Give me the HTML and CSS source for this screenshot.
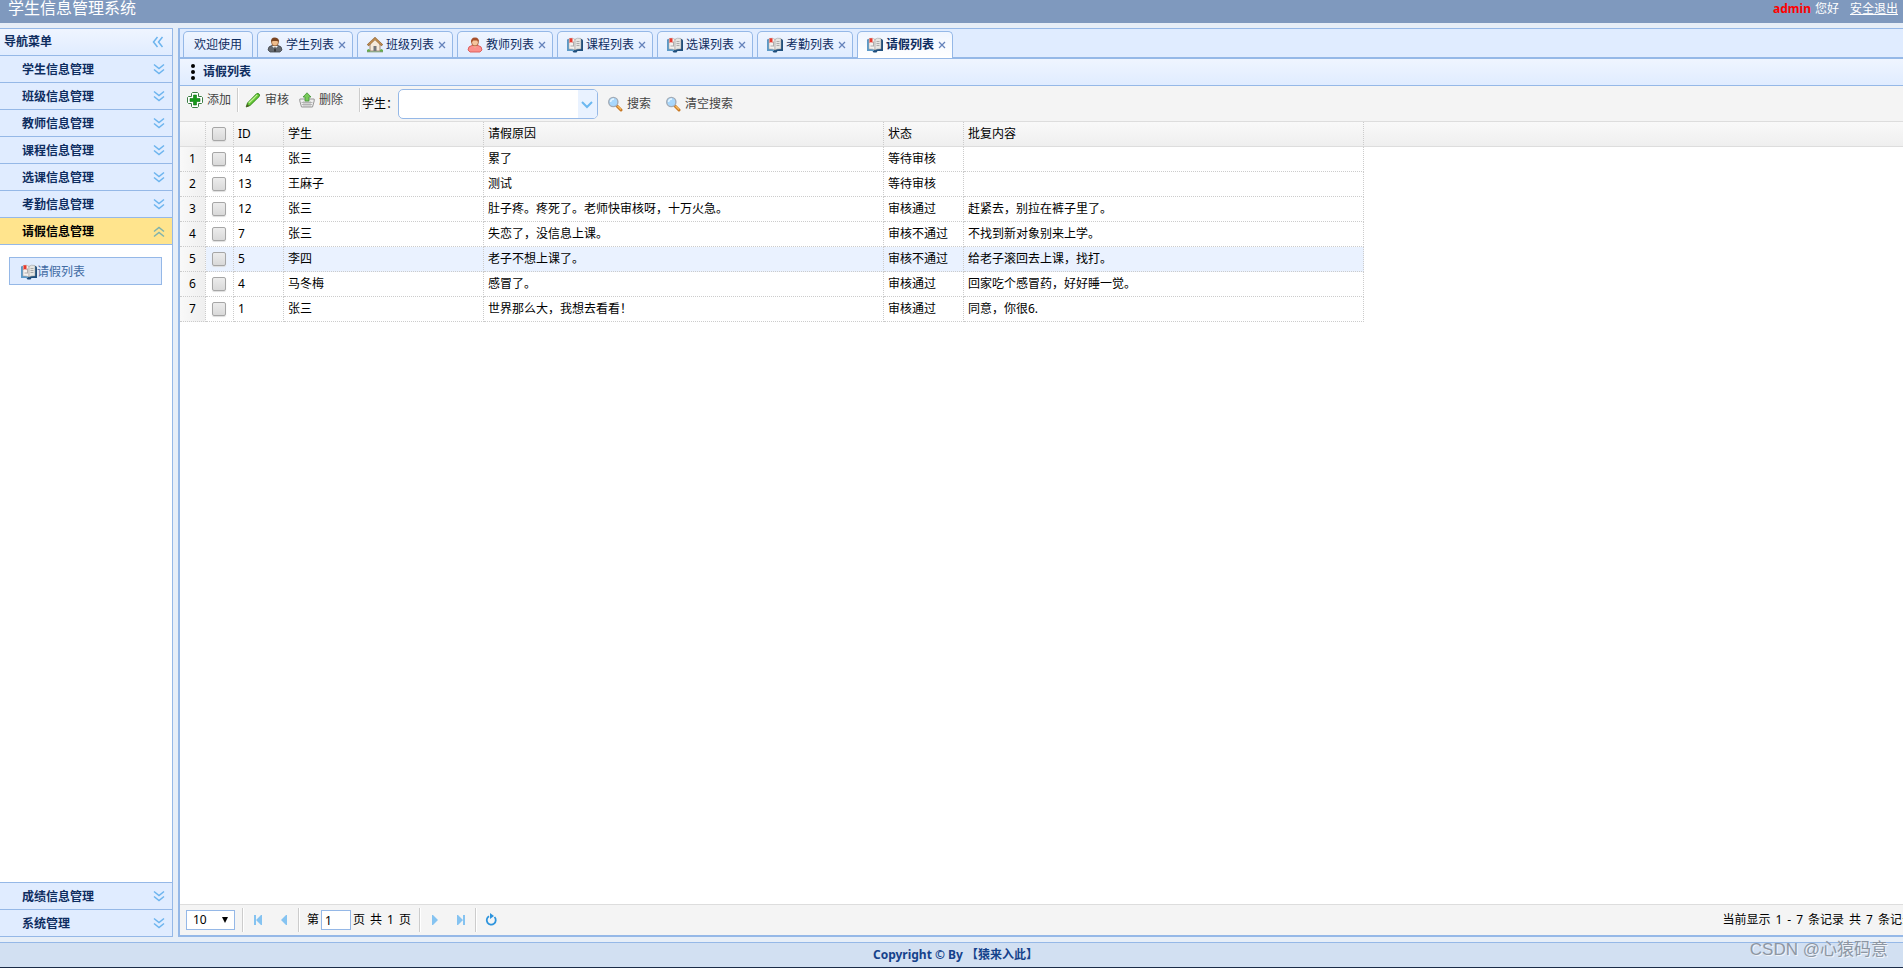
FILE: index.html
```html
<!DOCTYPE html>
<html lang="zh-CN">
<head>
<meta charset="utf-8">
<title>学生信息管理系统</title>
<link rel="stylesheet" href="styles.css">
</head>
<body>
<svg class="sprite" aria-hidden="true">
  <symbol id="down" viewBox="0 0 16 16"><path d="M3 2.500l5 4 5-4M3 7.500l5 4 5-4" fill="none" stroke="#6cb4ee" stroke-width="1.500"/></symbol>
  <symbol id="up" viewBox="0 0 16 16"><path d="M3 7.500l5-4 5 4M3 12.500l5-4 5 4" fill="none" stroke="#7fb2ad" stroke-width="1.500"/></symbol>
  <symbol id="left" viewBox="0 0 16 16"><path d="M7.500 3l-4 5 4 5M12.500 3l-4 5 4 5" fill="none" stroke="#6cb4ee" stroke-width="1.500"/></symbol>
  <symbol id="book" viewBox="0 0 16 16">
    <path d="M0 3.500L1 2h14l1 1.500V14h-5.500L9.500 15.500h-3L5.500 14H0z" fill="#1f4f7d"/>
    <path d="M0 3.500L1 2h1.500v10H7v2H0z" fill="#5c9ac8"/>
    <path d="M2 1.500q4-1 6 .8V13q-2-1.500-6-1z" fill="#f4f1ee" stroke="#a9a29c" stroke-width=".5"/>
    <path d="M14 1.500q-4-1-6 .8V13q2-1.500 6-1z" fill="#e6e6e3" stroke="#8f9191" stroke-width=".5"/>
    <path d="M9.500 4.500h3M9.500 6.500h3M9.500 8.500h3M3.500 9h2.500M6.500 4.500v5" stroke="#9c9c9c" stroke-width=".8"/>
    <path d="M2.500 1.300h3V6L4 5 2.500 6z" fill="#e8382c"/>
  </symbol>
  <symbol id="student" viewBox="0 0 16 16">
    <path d="M1 13q0-4 4-4.500h6q4 .5 4 4.500l-2 2H3z" fill="#666a70" stroke="#44474c" stroke-width=".8"/>
    <path d="M5 9l3 3 3-3z" fill="#f2f2f2"/><path d="M7.500 10h1l.5 4-1 1-1-1z" fill="#333"/>
    <circle cx="8" cy="5.500" r="3.400" fill="#f0bd8c" stroke="#895128" stroke-width=".7"/>
    <path d="M4 6Q3.500.5 8 .6T12 6l-1-2H5z" fill="#7b4521"/>
  </symbol>
  <symbol id="teacher" viewBox="0 0 16 16">
    <path d="M1 13q0-4 4-4.500h6q4 .5 4 4.500l-2 2H3z" fill="#fb8f8b" stroke="#db5755" stroke-width=".9"/>
    <path d="M6 8h4l-2 3z" fill="#f2bd94"/>
    <circle cx="8" cy="5.500" r="3.400" fill="#f6c59d" stroke="#984927" stroke-width=".7"/>
    <path d="M4 6Q3.500 .5 8 .5T12 6l-1-2.500H6z" fill="#a7502b"/>
  </symbol>
  <symbol id="house" viewBox="0 0 16 16">
    <path d="M3 7l5-5 5 5v7H3z" fill="#f5eadb" stroke="#92775d" stroke-width=".8"/>
    <path d="M.8 8.500L8 1.500l7.200 7" fill="none" stroke="#976936" stroke-width="2.400"/>
    <path d="M1.300 8L8 1.600 14.700 8" fill="none" stroke="#dca764" stroke-width="1"/>
    <path d="M6.500 9h3v5h-3z" fill="#73777c"/>
    <path d="M0 15v-2l1.500-1 1.500 1v2zM16 15v-2l-1.500-1-1.500 1v2z" fill="#66ad4b"/>
    <path d="M0 14.800h16" stroke="#7d9c70"/>
  </symbol>
  <symbol id="add" viewBox="0 0 16 16">
    <path d="M5.500.5h5l1 1v3h3l1 1v5l-1 1h-3v3l-1 1h-5l-1-1v-3h-3l-1-1v-5l1-1h3v-3z" fill="#fff" stroke="#3a7d43"/>
    <path d="M6.500 3h3v3.500H13v3H9.500V13h-3V9.500H3v-3h3.500z" fill="#159a19" stroke="#08720d" stroke-width=".6"/>
  </symbol>
  <symbol id="pencil" viewBox="0 0 16 16">
    <path d="M1.200 15l1.300-4L11.500 1.800Q13 1 14 2T14.200 4.500L5 13.500z" fill="#65c735" stroke="#278011" stroke-width=".9"/>
    <path d="M3.800 11L12.200 2.900" stroke="#c4f399" stroke-width="1.200"/>
    <path d="M1.200 15l1-3L4.200 14z" fill="#594e2a"/>
  </symbol>
  <symbol id="basket" viewBox="0 0 16 16">
    <path d="M.8 7h14.400v2l-1.700 6h-11L.8 9z" fill="#eee" stroke="#969696"/>
    <path d="M2.500 10.500h11M3 12.500h10M5 9v6M7 9v6M9 9v6M11 9v6" stroke="#aaa" stroke-width=".8"/>
    <path d="M8 .8l4 4.200h-2v4H6V5H4z" fill="#78ca58" stroke="#44933a" stroke-width=".8"/>
  </symbol>
  <symbol id="search" viewBox="0 0 16 16">
    <path d="M10 10l4 4" stroke="#c87925" stroke-width="3" stroke-linecap="round"/>
    <path d="M10.500 10l3.500 3.500" stroke="#f8bb5c" stroke-width="1.200"/>
    <circle cx="6.300" cy="6" r="4.600" fill="#a8d7fc" stroke="#a2abb6" stroke-width="1.400"/>
    <path d="M3.500 6Q4 3 7 3" fill="none" stroke="#e5f5ff" stroke-width="1.500"/>
  </symbol>
  <symbol id="close" viewBox="0 0 8 8"><path d="M1 1l6 6M7 1L1 7" stroke="#6482bb" stroke-width="1.300"/></symbol>
</svg>

<header class="banner">
  <h1 class="app-title">学生信息管理系统</h1>
  <div class="account"><strong class="user">admin</strong><span>您好</span><a class="logout" href="#">安全退出</a></div>
</header>

<div class="workspace">
  <nav class="sidebar" aria-label="导航菜单">
    <div class="side-head"><span>导航菜单</span><button class="tool" aria-label="折叠菜单"><svg class="icon"><use href="#left"/></svg></button></div>
    <button class="fold">学生信息管理<svg class="icon"><use href="#down"/></svg></button>
    <button class="fold">班级信息管理<svg class="icon"><use href="#down"/></svg></button>
    <button class="fold">教师信息管理<svg class="icon"><use href="#down"/></svg></button>
    <button class="fold">课程信息管理<svg class="icon"><use href="#down"/></svg></button>
    <button class="fold">选课信息管理<svg class="icon"><use href="#down"/></svg></button>
    <button class="fold">考勤信息管理<svg class="icon"><use href="#down"/></svg></button>
    <button class="fold open" aria-expanded="true">请假信息管理<svg class="icon"><use href="#up"/></svg></button>
    <div class="fold-body"><a class="side-link" href="#"><svg class="icon"><use href="#book"/></svg>请假列表</a></div>
    <button class="fold lower">成绩信息管理<svg class="icon"><use href="#down"/></svg></button>
    <button class="fold lower">系统管理<svg class="icon"><use href="#down"/></svg></button>
  </nav>

  <main class="content">
    <div class="tabs">
      <div class="tab"><a href="#">欢迎使用</a></div>
      <div class="tab closable"><svg class="icon"><use href="#student"/></svg><a href="#">学生列表</a><button class="close" aria-label="关闭"><svg><use href="#close"/></svg></button></div>
      <div class="tab closable"><svg class="icon"><use href="#house"/></svg><a href="#">班级列表</a><button class="close" aria-label="关闭"><svg><use href="#close"/></svg></button></div>
      <div class="tab closable"><svg class="icon"><use href="#teacher"/></svg><a href="#">教师列表</a><button class="close" aria-label="关闭"><svg><use href="#close"/></svg></button></div>
      <div class="tab closable"><svg class="icon"><use href="#book"/></svg><a href="#">课程列表</a><button class="close" aria-label="关闭"><svg><use href="#close"/></svg></button></div>
      <div class="tab closable"><svg class="icon"><use href="#book"/></svg><a href="#">选课列表</a><button class="close" aria-label="关闭"><svg><use href="#close"/></svg></button></div>
      <div class="tab closable"><svg class="icon"><use href="#book"/></svg><a href="#">考勤列表</a><button class="close" aria-label="关闭"><svg><use href="#close"/></svg></button></div>
      <div class="tab closable selected"><svg class="icon"><use href="#book"/></svg><a href="#">请假列表</a><button class="close" aria-label="关闭"><svg><use href="#close"/></svg></button></div>
    </div>

    <div class="panel-head">
      <svg class="icon" viewBox="0 0 16 16"><circle cx="8" cy="2" r="2"/><circle cx="8" cy="8" r="2"/><circle cx="8" cy="14" r="2"/></svg>
      <h2>请假列表</h2>
    </div>

    <div class="toolbar">
      <div class="actions">
        <button class="action"><svg class="icon"><use href="#add"/></svg>添加</button>
        <span class="rule"></span>
        <button class="action"><svg class="icon"><use href="#pencil"/></svg>审核</button>
        <button class="action"><svg class="icon"><use href="#basket"/></svg>删除</button>
        <span class="rule last"></span>
      </div>
      <div class="filter">
        <label for="student-name">学生：</label>
        <div class="combo"><input id="student-name" type="text"><button class="combo-arrow" aria-label="展开"><svg viewBox="0 0 18 28"><path d="M4 12l5 5 5-5" fill="none" stroke="#6cb8f0" stroke-width="2"/></svg></button></div>
        <button class="action"><svg class="icon"><use href="#search"/></svg>搜索</button>
        <button class="action"><svg class="icon"><use href="#search"/></svg>清空搜索</button>
      </div>
    </div>

    <div class="grid-area">
      <table class="grid">
        <colgroup><col class="c-num"><col class="c-check"><col class="c-id"><col class="c-student"><col class="c-wide"><col class="c-state"><col class="c-wide"><col></colgroup>
        <thead><tr><th></th><th class="check"><input type="checkbox" aria-label="全选"></th><th>ID</th><th>学生</th><th>请假原因</th><th>状态</th><th>批复内容</th><th class="rest"></th></tr></thead>
        <tbody>
          <tr><td class="num">1</td><td class="check"><input type="checkbox" aria-label="选择 14"></td><td>14</td><td>张三</td><td>累了</td><td>等待审核</td><td></td><td class="rest"></td></tr>
          <tr><td class="num">2</td><td class="check"><input type="checkbox" aria-label="选择 13"></td><td>13</td><td>王麻子</td><td>测试</td><td>等待审核</td><td></td><td class="rest"></td></tr>
          <tr><td class="num">3</td><td class="check"><input type="checkbox" aria-label="选择 12"></td><td>12</td><td>张三</td><td>肚子疼。疼死了。老师快审核呀，十万火急。</td><td>审核通过</td><td>赶紧去，别拉在裤子里了。</td><td class="rest"></td></tr>
          <tr><td class="num">4</td><td class="check"><input type="checkbox" aria-label="选择 7"></td><td>7</td><td>张三</td><td>失恋了，没信息上课。</td><td>审核不通过</td><td>不找到新对象别来上学。</td><td class="rest"></td></tr>
          <tr class="hover"><td class="num">5</td><td class="check"><input type="checkbox" aria-label="选择 5"></td><td>5</td><td>李四</td><td>老子不想上课了。</td><td>审核不通过</td><td>给老子滚回去上课，找打。</td><td class="rest"></td></tr>
          <tr><td class="num">6</td><td class="check"><input type="checkbox" aria-label="选择 4"></td><td>4</td><td>马冬梅</td><td>感冒了。</td><td>审核通过</td><td>回家吃个感冒药，好好睡一觉。</td><td class="rest"></td></tr>
          <tr><td class="num">7</td><td class="check"><input type="checkbox" aria-label="选择 1"></td><td>1</td><td>张三</td><td>世界那么大，我想去看看！</td><td>审核通过</td><td>同意，你很6.</td><td class="rest"></td></tr>
        </tbody>
      </table>
    </div>

    <div class="pager">
      <div class="size"><select aria-label="每页条数"><option>10</option></select></div>
      <span class="rule"></span>
      <button class="page-btn" aria-label="首页"><svg viewBox="0 0 16 16"><path d="M4 3h2v10H4zM12 3v10h-1L6 8l5-5z"/></svg></button>
      <button class="page-btn" aria-label="上一页"><svg viewBox="0 0 16 16"><path d="M11 3v10h-1L5 8l5-5z"/></svg></button>
      <span class="rule"></span>
      <div class="page-no"><label for="page">第</label><input id="page" type="text" value="1"><span class="words"><span>页</span> <span>共</span> <span>1</span> <span>页</span></span></div>
      <span class="rule"></span>
      <button class="page-btn" aria-label="下一页"><svg viewBox="0 0 16 16"><path d="M5 3v10h1l5-5-5-5z"/></svg></button>
      <button class="page-btn" aria-label="末页"><svg viewBox="0 0 16 16"><path d="M10 3h2v10h-2zM4 3v10h1l5-5-5-5z"/></svg></button>
      <span class="rule"></span>
      <button class="page-btn" aria-label="刷新"><svg viewBox="0 0 16 16"><path d="M11.500 5A4.500 4.500 0 1 1 6 4.200" fill="none" stroke="#2d94dd" stroke-width="1.800"/><path class="tip" d="M7 1l4 3-4 3z"/></svg></button>
      <div class="info words"><span>当前显示</span> <span>1</span> <span>-</span> <span>7</span> <span>条记录</span> <span>共</span> <span>7</span> <span>条记录</span></div>
    </div>
  </main>
</div>

<footer class="footer">Copyright © By 【猿来入此】</footer>
<div class="watermark">CSDN @心猿码意</div>
</body>
</html>
```
FILE: styles.css
```css
* { box-sizing: border-box; }
html, body { height: 100%; }
body {
  margin: 0;
  display: flex;
  flex-direction: column;
  overflow: hidden;
  background: #e6eef8;
  color: #000;
  font: 12px/18px "Noto Sans", "Noto Sans CJK SC", sans-serif;
}
button, input, select { font: inherit; color: inherit; }
button { border: 0; padding: 0; background: none; cursor: pointer; }
a { color: inherit; text-decoration: none; }
.sprite { display: none; }
.icon { width: 16px; height: 16px; flex: none; display: block; }

.banner {
  height: 23px;
  flex: none;
  display: flex;
  justify-content: space-between;
  padding: 0 5px 0 8px;
  background: #7f99be;
  color: #fff;
}
.app-title { margin: 0; font-size: 16px; line-height: 16px; font-weight: 400; }
.account { display: flex; gap: 4px; }
.user { color: #f00; }
.logout { margin-left: 7px; text-decoration: underline; }

.workspace {
  flex: 1;
  min-height: 0;
  display: flex;
  gap: 5px;
  padding: 5px 0;
}
.sidebar {
  width: 173px;
  flex: none;
  display: flex;
  flex-direction: column;
  border: 1px solid #95b8e7;
  border-left: 0;
  background: #fff;
  color: #0e2d5f;
  font-weight: 700;
}
.side-head, .fold {
  height: 27px;
  flex: none;
  display: flex;
  align-items: center;
  justify-content: space-between;
  border-bottom: 1px solid #95b8e7;
}
.side-head { padding: 0 6px 0 4px; background: linear-gradient(#eff5ff, #e0ecff); }
.fold { padding: 2px 5px 0 22px; background: #e0ecff; font-weight: 700; text-align: left; }
.fold.open { background: #ffe48d; color: #000; }
.fold.lower { border-top: 1px solid #95b8e7; border-bottom: 0; }
.fold-body { flex: 1; padding: 12px 10px 12px 9px; }
.side-link {
  height: 28px;
  display: flex;
  align-items: center;
  padding: 2px 0 0 11px;
  border: 1px solid #95b8e7;
  background: #e0ecff;
  color: #416aa3;
  font-weight: 400;
}

.content {
  flex: 1;
  min-width: 0;
  margin-right: -20px;
  display: flex;
  flex-direction: column;
  border: 1px solid #95b8e7;
  border-width: 1px 2px 2px;
  background: #fff;
}
.tabs {
  height: 30px;
  flex: none;
  display: flex;
  align-items: flex-end;
  gap: 4px;
  padding-left: 3px;
  border-bottom: 2px solid #95b8e7;
  background: #e0ecff;
  color: #0e2d5f;
}
.tab {
  height: 26px;
  display: flex;
  align-items: center;
  padding: 0 10px;
  border: 1px solid #95b8e7;
  border-bottom: 0;
  border-radius: 5px 5px 0 0;
  background: linear-gradient(#eff5ff, #e0ecff);
}
.tab.closable { gap: 3px; padding: 0 6px 0 9px; }
.tab.selected { height: 27px; margin-bottom: -1px; background: linear-gradient(#eff5ff, #fff); font-weight: 700; }
.close { width: 8px; height: 8px; margin-left: 1px; display: flex; }
.close svg { width: 8px; height: 8px; }

.panel-head {
  height: 27px;
  flex: none;
  display: flex;
  align-items: center;
  gap: 2px;
  padding-left: 5px;
  border-bottom: 1px solid #95b8e7;
  background: linear-gradient(#eff5ff, #e0ecff);
  color: #0e2d5f;
}
.panel-head .icon { fill: #000; }
.panel-head h2 { margin: 0; font-size: 12px; line-height: 18px; }

.toolbar {
  height: 36px;
  flex: none;
  display: flex;
  border-bottom: 1px solid #ddd;
  background: #f4f4f4;
}
.actions { height: 28px; display: flex; align-items: center; padding-left: 7px; }
.action { display: flex; align-items: center; gap: 4px; color: #444; }
.rule { width: 2px; height: 24px; flex: none; border-left: 1px solid #ccc; border-right: 1px solid #fff; }
.actions .rule { margin: 0 6px; }
.actions .action + .action { margin-left: 10px; }
.actions .rule.last { margin: 0 0 0 16px; }
.filter { display: flex; align-items: center; gap: 14px; padding-top: 1px; }
.filter label { margin-right: -14px; padding-left: 1px; color: #000; }
.combo {
  width: 200px;
  height: 30px;
  margin-right: -5px;
  display: flex;
  border: 1px solid #95b8e7;
  border-radius: 5px;
  background: #fff;
  overflow: hidden;
}
.combo input { flex: 1; min-width: 0; border: 0; padding: 0 4px; outline: 0; background: none; }
.combo-arrow { width: 19px; background: #e9f2ff; }
.combo-arrow svg { width: 18px; height: 28px; display: block; }

.grid-area { flex: 1; min-height: 0; overflow: hidden; }
.grid { width: 100%; table-layout: fixed; border-collapse: separate; border-spacing: 0; }
.c-num { width: 26px; }
.c-check { width: 28px; }
.c-id { width: 50px; }
.c-student { width: 200px; }
.c-wide { width: 400px; }
.c-state { width: 80px; }
.grid th, .grid td {
  height: 25px;
  padding: 0 4px;
  border-right: 1px dotted #ccc;
  border-bottom: 1px dotted #ccc;
  font-weight: 400;
  text-align: left;
  white-space: nowrap;
}
.grid th { border-bottom: 1px solid #ddd; background: linear-gradient(#f9f9f9, #efefef); }
.grid .rest { border-right: 0; }
.grid td.rest { border-bottom: 0; }
.grid td.num { background: linear-gradient(90deg, #f9f9f9, #efefef); text-align: center; padding: 0; }
.grid .check { padding: 0 0 0 6px; }
.grid .hover td:not(.num):not(.rest) { background: #eaf2ff; }
.check input {
  appearance: none;
  width: 14px;
  height: 14px;
  margin: 0;
  display: block;
  border: 1px solid #a6a6a6;
  border-radius: 2px;
  background: linear-gradient(#ececec, #d9d9d9);
  box-shadow: 0 1px 1px #ddd;
}

.pager {
  height: 31px;
  flex: none;
  display: flex;
  align-items: center;
  padding: 0 7px 0 6px;
  border-top: 1px solid #ddd;
  background: #f4f4f4;
}
.size { position: relative; margin-right: 7px; }
.size::after {
  content: "";
  position: absolute;
  right: 7px;
  top: 7px;
  border: 3px solid transparent;
  border-top: 6px solid #000;
  border-bottom: 0;
  pointer-events: none;
}
.size select {
  width: 49px;
  height: 20px;
  display: block;
  appearance: none;
  padding: 0 6px;
  line-height: 18px;
  border: 1px solid #95b8e7;
  border-radius: 0;
  background: #fff;
}
.page-btn { width: 26px; height: 26px; display: grid; place-items: center; }
.page-btn svg { width: 16px; height: 16px; fill: #85c3f1; }
.page-btn .tip { fill: #2d94dd; }
.pager .rule + .page-btn { margin-left: 1px; }
.pager .page-btn + .rule { margin-left: 1px; }
.page-no { display: flex; align-items: center; gap: 2px; margin: 0 8px 0 7px; }
.page-no input { width: 30px; height: 20px; padding: 0 3px; border: 1px solid #95b8e7; background: #fff; }
.words { display: flex; gap: 5px; }
.info { margin-left: auto; white-space: nowrap; }

.footer {
  height: 26px;
  flex: none;
  padding-left: 8px;
  border-top: 1px solid #95b8e7;
  border-bottom: 1px solid #1b2c47;
  background: #d2e0f2;
  color: #15428b;
  font-weight: 700;
  line-height: 24px;
  text-align: center;
}
.watermark {
  position: absolute;
  right: 15px;
  bottom: 6px;
  color: #8d96a3;
  font: 17px/24px "Liberation Sans", "Noto Sans CJK SC", sans-serif;
  text-shadow: 1px 1px 0 #f1f4f9;
}
```
